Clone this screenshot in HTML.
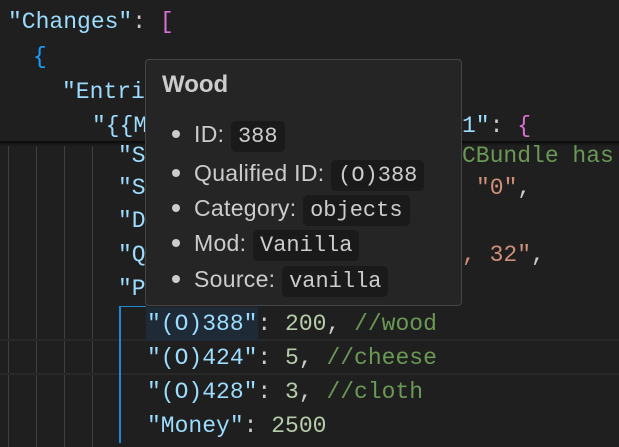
<!DOCTYPE html>
<html><head><style>
body{margin:0;width:619px;height:447px;background:#1f1f1f;overflow:hidden;position:relative;font-family:"Liberation Mono",monospace;font-size:23px;}
.l{position:absolute;white-space:pre;line-height:34px;height:34px;}
.k{color:#9cdcfe}.p{color:#da70d6}.b{color:#179fff}.s{color:#ce9178}.c{color:#6a9955}.n{color:#b5cea8}.w{color:#cccccc}
.g{position:absolute;width:1px;background:#404040;top:146px;height:301px}
#tt{position:absolute;left:145px;top:59px;width:315px;height:245px;background:#252526;border:1px solid #454545;border-radius:4px;font-family:"Liberation Sans",sans-serif;color:#cccccc;}
#tt .t{position:absolute;left:16px;top:11px;font-weight:bold;font-size:24px;}
#tt .r{position:absolute;left:26px;font-size:23px;white-space:nowrap;height:30px;line-height:30px;letter-spacing:0.3px}
#tt .r:before{content:"";display:inline-block;width:8px;height:8px;border-radius:50%;background:#cccccc;margin-right:14px;vertical-align:middle;position:relative;top:-2px}
.code{font-family:"Liberation Mono",monospace;background:#1a1a1a;border-radius:5px;padding:3px 7px;font-size:22px;letter-spacing:0}
</style></head><body>
<div class="l" style="left:8px;top:5px"><span class="k">"Changes"</span><span class="w">: </span><span class="p">[</span></div>
<div class="l b" style="left:33px;top:40px">{</div>
<div class="l k" style="left:62px;top:75px">"Entries"</div>
<div class="l" style="left:92px;top:109px"><span class="k">"{{ModId}}_Entry1"</span></div>
<div class="l" style="left:462px;top:109px;background:#1f1f1f"><span class="k">1"</span><span class="w">: </span><span class="p">{</span></div>
<div style="position:absolute;left:0;top:141px;width:619px;height:5px;background:linear-gradient(#0a0a0a,#1f1f1f)"></div>
<div class="g" style="left:8px"></div><div class="g" style="left:36px"></div><div class="g" style="left:64px"></div><div class="g" style="left:92px"></div>
<div style="position:absolute;left:0;top:339px;width:619px;height:2px;background:#282828"></div>
<div style="position:absolute;left:0;top:373px;width:619px;height:2px;background:#282828"></div>
<div style="position:absolute;left:119px;top:306px;width:2px;height:137px;background:#1f8ad2"></div>
<div style="position:absolute;left:121px;top:306px;width:25px;height:1px;background:#1f8ad2"></div>
<div class="l k" style="left:118px;top:139px">"S</div>
<div class="l c" style="left:462px;top:139px">CBundle has</div>
<div class="l k" style="left:118px;top:171px">"S</div>
<div class="l" style="left:476px;top:171px"><span class="s">"0"</span><span class="w">,</span></div>
<div class="l k" style="left:118px;top:204px">"D</div>
<div class="l k" style="left:118px;top:238px">"Q</div>
<div class="l" style="left:462px;top:238px"><span class="s">, 32"</span><span class="w">,</span></div>
<div class="l k" style="left:118px;top:272px">"P</div>
<div style="position:absolute;left:146px;top:307px;width:112px;height:34px;background:#1e2a36"></div>
<div class="l" style="left:147px;top:307px"><span class="k">"(O)388"</span><span class="w">: </span><span class="n">200</span><span class="w">, </span><span class="c">//wood</span></div>
<div class="l" style="left:147px;top:341px"><span class="k">"(O)424"</span><span class="w">: </span><span class="n">5</span><span class="w">, </span><span class="c">//cheese</span></div>
<div class="l" style="left:147px;top:375px"><span class="k">"(O)428"</span><span class="w">: </span><span class="n">3</span><span class="w">, </span><span class="c">//cloth</span></div>
<div class="l" style="left:147px;top:409px"><span class="k">"Money"</span><span class="w">: </span><span class="n">2500</span></div>
<div id="tt">
<div class="t">Wood</div>
<div class="r" style="top:59px">ID: <span class="code">388</span></div>
<div class="r" style="top:98px">Qualified ID: <span class="code">(O)388</span></div>
<div class="r" style="top:133px">Category: <span class="code">objects</span></div>
<div class="r" style="top:168px">Mod: <span class="code">Vanilla</span></div>
<div class="r" style="top:204px">Source: <span class="code">vanilla</span></div>
</div>
</body></html>
